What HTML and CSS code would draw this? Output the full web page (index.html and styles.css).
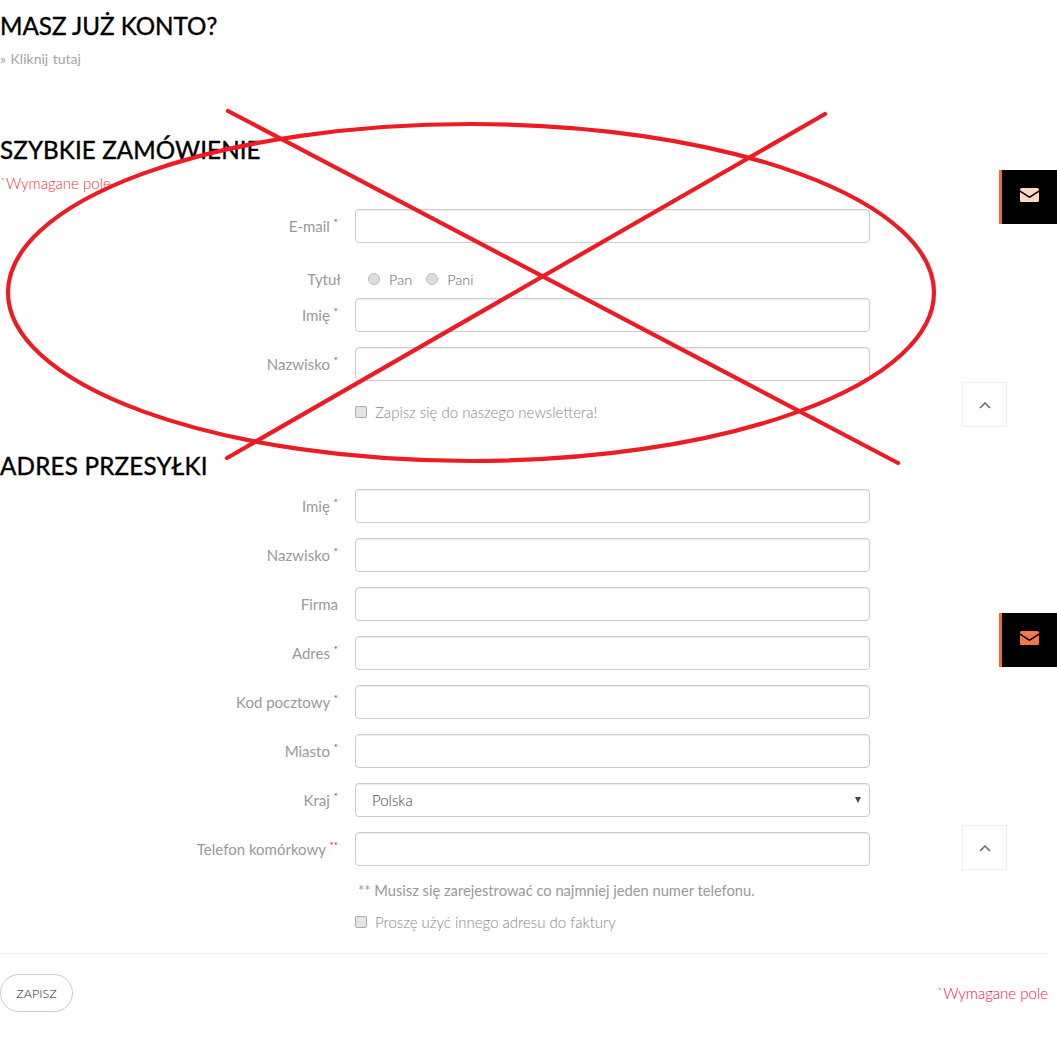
FILE: index.html
```html
<!DOCTYPE html>
<html lang="pl">
<head>
    <meta charset="UTF-8">
    <title>Zamówienie</title>
    <link rel="stylesheet" href="styles.css">
</head>
<body>
    <div class="page">
        <h1 class="title first">MASZ JUŻ KONTO?</h1>
        <p class="login-link">» Kliknij tutaj</p>

        <h1 class="title quick">SZYBKIE ZAMÓWIENIE</h1>
        <p class="required">`Wymagane pole</p>

        <!-- Szybkie zamowienie -->
        <div class="row email-row">
            <label class="label">E-mail <sup>*</sup></label>
            <input class="field" type="text">
        </div>
        <div class="row title-row">
            <label class="label plain">Tytuł</label>
            <div class="radios">
                <span class="radio"></span><span class="radio-text">Pan</span>
                <span class="radio"></span><span class="radio-text">Pani</span>
            </div>
        </div>
        <div class="row">
            <label class="label">Imię <sup>*</sup></label>
            <input class="field" type="text">
        </div>
        <div class="row">
            <label class="label">Nazwisko <sup>*</sup></label>
            <input class="field" type="text">
        </div>
        <div class="check-row newsletter">
            <span class="check"></span><span class="check-text">Zapisz się do naszego newslettera!</span>
        </div>

        <h1 class="title address">ADRES PRZESYŁKI</h1>

        <!-- Adres -->
        <div class="row">
            <label class="label">Imię <sup>*</sup></label>
            <input class="field" type="text">
        </div>
        <div class="row">
            <label class="label">Nazwisko <sup>*</sup></label>
            <input class="field" type="text">
        </div>
        <div class="row">
            <label class="label">Firma</label>
            <input class="field" type="text">
        </div>
        <div class="row">
            <label class="label">Adres <sup>*</sup></label>
            <input class="field" type="text">
        </div>
        <div class="row">
            <label class="label">Kod pocztowy <sup>*</sup></label>
            <input class="field" type="text">
        </div>
        <div class="row">
            <label class="label">Miasto <sup>*</sup></label>
            <input class="field" type="text">
        </div>
        <div class="row">
            <label class="label">Kraj <sup>*</sup></label>
            <div class="field select"><span>Polska</span><i class="caret"></i></div>
        </div>
        <div class="row">
            <label class="label">Telefon komórkowy <sup>**</sup></label>
            <input class="field" type="text">
        </div>
        <p class="note">** Musisz się zarejestrować co najmniej jeden numer telefonu.</p>
        <div class="check-row invoice">
            <span class="check"></span><span class="check-text">Proszę użyć innego adresu do faktury</span>
        </div>

        <div class="footer">
            <button class="save">ZAPISZ</button>
            <span class="required">`Wymagane pole</span>
        </div>
    </div>

    <!-- Boczne przyciski -->
    <div class="side-mail mail-one">
        <svg width="19" height="14" viewBox="0 0 19 14"><path fill="#ffd6c2" d="M1.5 0h16A1.5 1.5 0 0 1 19 1.5v.7l-8.600 5.600a1.600 1.600 0 0 1-1.800 0L0 2.200v-.7A1.500 1.500 0 0 1 1.500 0z"/><path fill="#ffd6c2" d="M0 4l8 5.200a2.700 2.700 0 0 0 3 0L19 4v8.500a1.500 1.500 0 0 1-1.500 1.500h-16A1.500 1.500 0 0 1 0 12.500z"/></svg>
    </div>
    <div class="side-mail mail-two">
        <svg width="19" height="14" viewBox="0 0 19 14"><path fill="#f2784b" d="M1.5 0h16A1.5 1.5 0 0 1 19 1.5v.7l-8.600 5.600a1.600 1.600 0 0 1-1.800 0L0 2.200v-.7A1.500 1.500 0 0 1 1.500 0z"/><path fill="#f2784b" d="M0 4l8 5.200a2.700 2.700 0 0 0 3 0L19 4v8.500a1.500 1.500 0 0 1-1.500 1.500h-16A1.500 1.500 0 0 1 0 12.500z"/></svg>
    </div>
    <div class="to-top top-one">
        <svg width="12" height="8" viewBox="0 0 12 8"><path d="M1 7l5-5 5 5" fill="none" stroke="#666" stroke-width="1.500"/></svg>
    </div>
    <div class="to-top top-two">
        <svg width="12" height="8" viewBox="0 0 12 8"><path d="M1 7l5-5 5 5" fill="none" stroke="#666" stroke-width="1.500"/></svg>
    </div>

    <!-- Czerwone skreslenie -->
    <svg class="cross-out" width="1057" height="1053" viewBox="0 0 1057 1053">
        <ellipse cx="471" cy="292.500" rx="463" ry="168.500" fill="none" stroke="#ed1c24" stroke-width="4.200"/>
        <path d="M228 111L898 463M825 114L227 458" fill="none" stroke="#ed1c24" stroke-width="4.200" stroke-linecap="round"/>
    </svg>
</body>
</html>
```
FILE: styles.css
```css
/* Ogolne */
* {
    box-sizing: border-box;
}

body {
    margin: 0;
    background: #fff;
    font-family: 'Lato', sans-serif;
    font-size: 15px;
    color: #999;
    overflow: hidden;
}

.page {
    width: 1048px;
    height: 1053px;
}

.title {
    margin: 0;
    font-size: 24.200px;
    line-height: 30px;
    font-weight: 400;
    color: #000;
    -webkit-text-stroke: 0.4px #000;
}

.title.first {
    padding-top: 11px;
}

.login-link {
    margin: 8px 0 0;
    line-height: 20px;
    font-size: 14px;
    word-spacing: 1px;
    color: #a5a5a5;
}

.title.quick {
    margin-top: 66px;
    letter-spacing: 0.1px;
}

.required {
    margin: 8px 0 0;
    line-height: 20px;
    font-weight: 300;
    color: #f0353c;
}

/* Wiersze formularza */
.row {
    display: flex;
    align-items: center;
    height: 34px;
    margin-bottom: 15px;
}

.email-row {
    margin-top: 16px;
    margin-bottom: 25px;
}

.title-row {
    height: 22px;
    margin-bottom: 8px;
}

.label {
    width: 340px;
    margin-right: 15px;
    padding-right: 2px;
    text-align: right;
    color: #999;
}

.label.plain {
    width: 341px;
    margin-right: 14px;
    padding-right: 0;
}

.label sup {
    color: #e8202a;
    font-size: 10px;
    line-height: 0;
}

.field {
    display: block;
    width: 515px;
    height: 34px;
    border: 1px solid #ccc;
    border-radius: 4px;
    background: #fff;
    outline: none;
    box-shadow: inset 0 1px 1px rgba(0, 0, 0, 0.075);
}

.select {
    display: flex;
    align-items: center;
    justify-content: space-between;
    padding: 0 8px 0 16px;
    font-weight: 300;
    color: #444;
}

.caret {
    width: 0;
    height: 0;
    border-left: 3px solid transparent;
    border-right: 3px solid transparent;
    border-top: 6px solid #444;
}

.radios {
    display: flex;
    align-items: center;
    padding-left: 13px;
}

.radio {
    width: 12px;
    height: 12px;
    margin-right: 9px;
    border: 1px solid #bbb;
    border-radius: 50%;
    background: #ddd;
}

.radio-text {
    margin-right: 14px;
    font-size: 14.500px;
    font-weight: 300;
    color: #666;
}

.check-row {
    display: flex;
    align-items: center;
    padding-left: 355px;
    height: 20px;
}

.newsletter {
    margin-top: 21px;
}

.check {
    width: 12px;
    height: 12px;
    margin-right: 8px;
    border: 1px solid #aaa;
    border-radius: 2px;
    background: #e4e4e4;
}

.check-text {
    font-weight: 300;
    color: #888;
}

.title.address {
    margin-top: 29px;
    margin-bottom: 8px;
    letter-spacing: 0.2px;
}

.note {
    margin: -2px 0 0 358px;
    padding-top: 1px;
    line-height: 20px;
    font-size: 14.700px;
    color: #999;
}

.invoice {
    margin-top: 12px;
}

.footer {
    display: flex;
    justify-content: space-between;
    align-items: center;
    margin-top: 21px;
    padding-top: 20px;
    border-top: 1px solid #eee;
}

.save {
    width: 73px;
    height: 38px;
    border: 1px solid #ccc;
    border-radius: 19px;
    background: #fff;
    font-family: 'Lato', sans-serif;
    font-size: 12.500px;
    font-weight: 300;
    color: #222;
}

.footer .required {
    margin: 0;
    color: #f01840;
}

/* Elementy plywajace */
.side-mail {
    position: absolute;
    left: 999px;
    width: 58px;
    height: 54px;
    display: flex;
    align-items: center;
    justify-content: center;
    padding-bottom: 4px;
    background: #000;
    border-left: 3px solid #f26a2e;
}

.mail-one {
    top: 170px;
}

.mail-two {
    top: 613px;
}

.to-top {
    position: absolute;
    left: 962px;
    width: 45px;
    height: 45px;
    display: flex;
    align-items: center;
    justify-content: center;
    border: 1px solid #eee;
    background: #fff;
}

.top-one {
    top: 382px;
}

.top-two {
    top: 825px;
}

.cross-out {
    position: absolute;
    top: 0;
    left: 0;
    pointer-events: none;
}
```
